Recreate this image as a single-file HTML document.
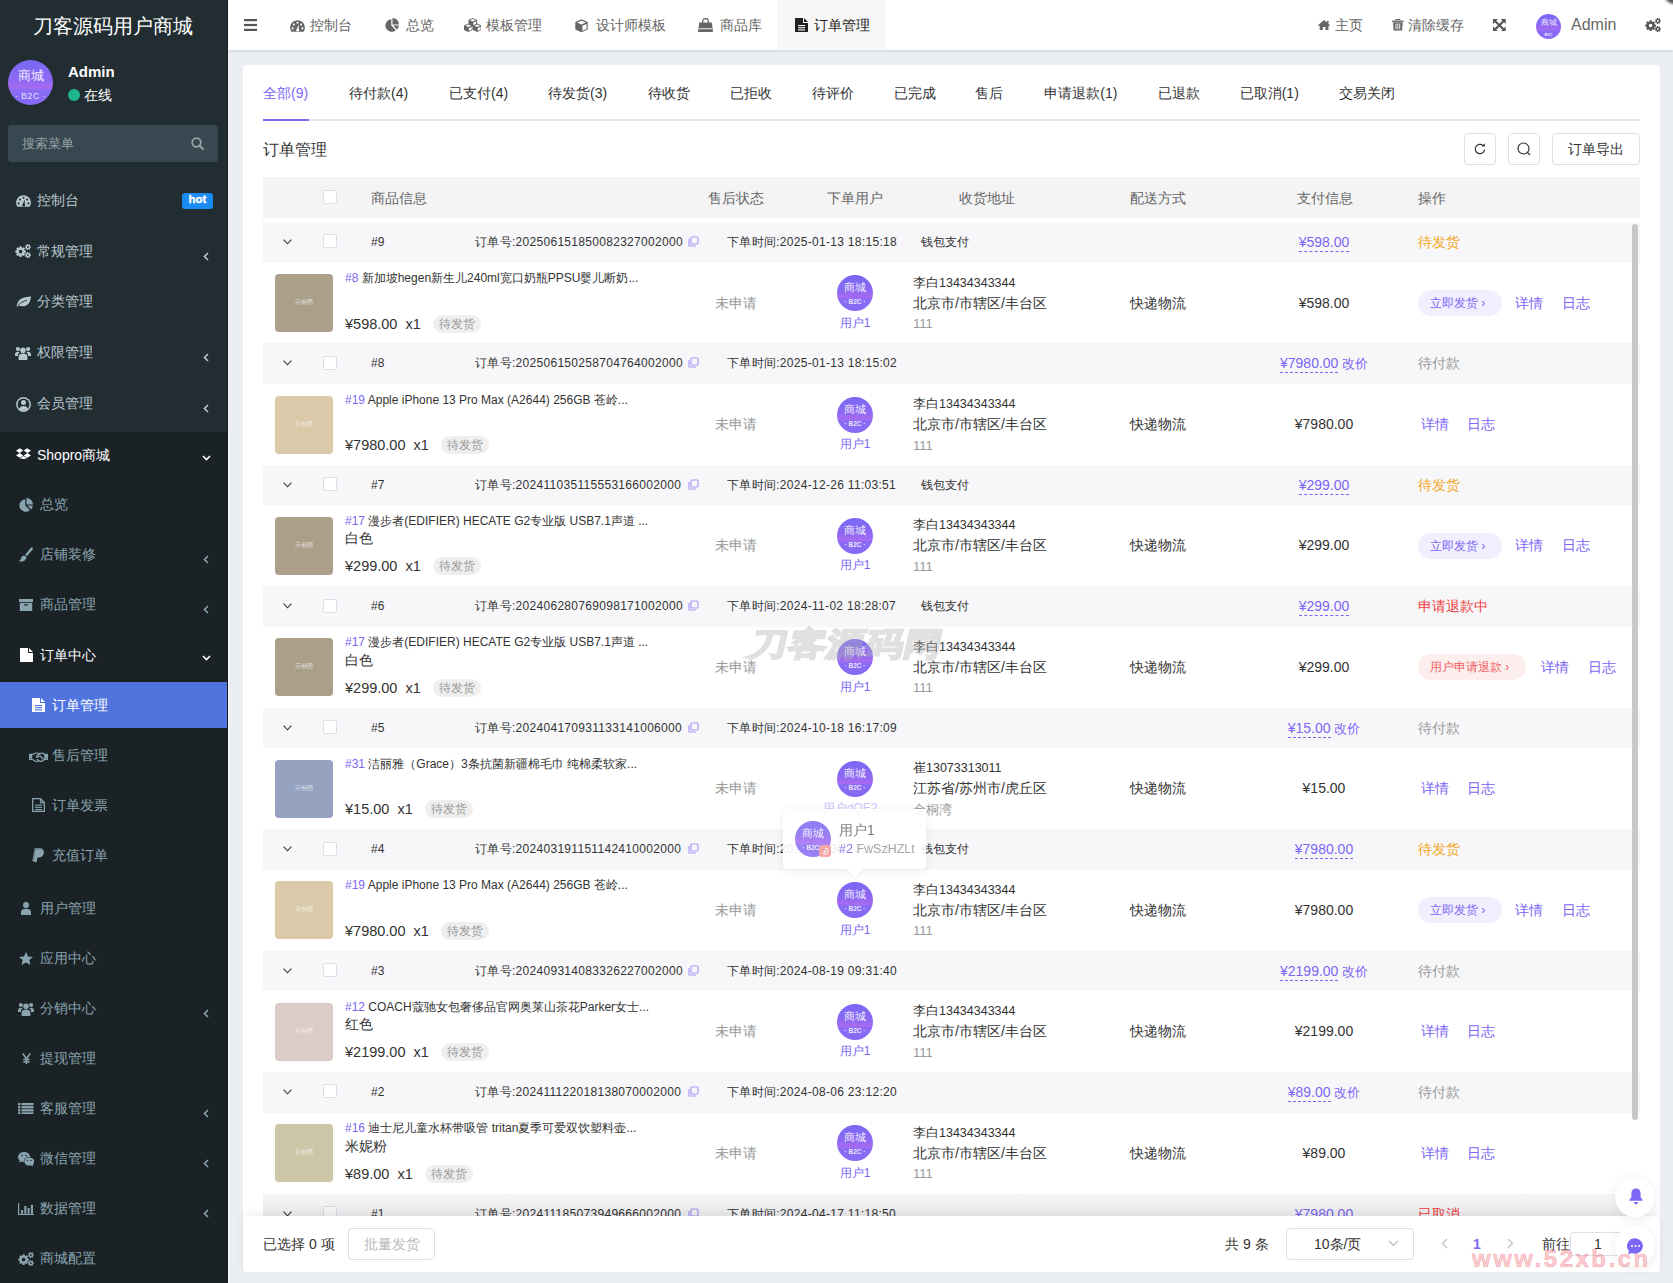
<!DOCTYPE html><html><head><meta charset="utf-8"><style>
*{margin:0;padding:0;box-sizing:border-box}
html,body{width:1673px;height:1283px;overflow:hidden}
body{font-family:"Liberation Sans",sans-serif;background:#ebeef3;position:relative;color:#333;font-size:14px}
.a{position:absolute;white-space:nowrap}
.sb{position:absolute;left:0;top:0;width:228px;height:1283px;background:#1a2226;overflow:hidden}
.sbtop{position:absolute;left:0;top:0;width:228px;height:432px;background:#222d32}
.sbedge{position:absolute;left:227px;top:0;width:1px;height:1283px;background:#141a1d}
.hd{position:absolute;left:228px;top:0;width:1445px;height:50px;background:#fff;box-shadow:0 1px 3px rgba(0,0,0,.12)}
.card{position:absolute;left:243px;top:65px;width:1417px;height:1207px;background:#fff;border-radius:4px}
.mi{color:#b8c7ce;font-size:14px}
.si{color:#8aa4af;font-size:14px}
.ic{position:absolute}
.grp{position:absolute;left:263px;width:1377px;height:40.6px;background:#f7f7f9}
.txt12{font-size:12px;color:#333}
.cb{position:absolute;width:14px;height:14px;border:1px solid #dcdfe6;border-radius:2px;background:#fff}
.img{position:absolute;left:275px;width:58px;height:58px;border-radius:4px}
.img span{position:absolute;left:0;right:0;top:24px;text-align:center;font-size:6px;color:rgba(255,255,255,.7)}
.tag{position:absolute;height:18px;line-height:18px;border-radius:9px;background:#efefef;color:#999;font-size:12px;padding:0 6px}
.av{position:absolute;width:36px;height:36px;border-radius:50%;background:linear-gradient(180deg,#7868f5 0%,#8f69f2 45%,#a86af0 62%,#8a6cf5 66%,#8669f4 100%);overflow:hidden}
.av b{position:absolute;left:0;right:0;top:6px;text-align:center;color:rgba(255,255,255,.9);font-weight:normal;font-size:11px;line-height:13px}
.av i{position:absolute;left:0;right:0;top:23px;text-align:center;color:rgba(255,255,255,.85);font-style:normal;font-weight:bold;font-size:6.5px;line-height:8px}
.pur{color:#7b66f5}
.btnp{position:absolute;height:26px;line-height:26px;border-radius:13px;font-size:12px;padding:0 12px}
</style></head><body>
<div class="sb"><div class="sbtop"></div>
<div class="a" style="left:0;top:1px;width:226px;height:50px;line-height:50px;text-align:center;color:#fff;font-size:20px">刀客源码用户商城</div>
<div class="av" style="left:8px;top:60px;width:45px;height:45px"><b style="top:8px;font-size:13px;line-height:15px">商城</b><i style="top:30.5px;font-size:8.5px;line-height:10px;font-weight:normal;letter-spacing:.6px">· B2C ·</i></div>
<div class="a" style="left:68px;top:62px;line-height:20px;color:#fff;font-weight:bold;font-size:15px">Admin</div>
<div class="a" style="left:68px;top:89px;width:12px;height:12px;border-radius:50%;background:#1fb58f"></div>
<div class="a" style="left:84px;top:85px;line-height:20px;color:#fff;font-size:14px">在线</div>
<div class="a" style="left:8px;top:125px;width:210px;height:37px;background:#374850;border-radius:3px"></div>
<div class="a" style="left:22px;top:134px;line-height:20px;color:#99a3a8;font-size:13px">搜索菜单</div>
<svg class="a" style="left:191px;top:137px" width="13" height="13" viewBox="0 0 13 13"><circle cx="5.5" cy="5.5" r="4.3" fill="none" stroke="#9aa2a6" stroke-width="1.8"/><path d="M8.6 8.6 L12 12" stroke="#9aa2a6" stroke-width="2" stroke-linecap="round"/></svg>
<div class="a" style="left:0;top:682px;width:228px;height:46px;background:#5073de"></div>
<div class="a" style="left:37px;top:190px;line-height:20px;color:#b8c7ce;font-size:14px">控制台</div>
<svg class="a" style="left:15.6px;top:194.5px" width="15" height="12" viewBox="0 0 15 12" preserveAspectRatio="none"><path d="M1.41 11.8 A7.4 7.4 0 1 1 13.59 11.8 Z" fill="#b8c7ce"/><circle cx="2.6" cy="8.4" r="1.05" fill="#222d32"/><circle cx="3.9" cy="4.6" r="1.05" fill="#222d32"/><circle cx="7.5" cy="2.7" r="1.05" fill="#222d32"/><circle cx="11.1" cy="4.6" r="1.05" fill="#222d32"/><circle cx="12.4" cy="8.4" r="1.05" fill="#222d32"/><path d="M6.5 10.2 L8.6 4.2 L8.9 10.4 Z" fill="#222d32"/><circle cx="7.7" cy="10.2" r="1.4" fill="#222d32"/></svg>
<div class="a" style="left:182px;top:193px;width:31px;height:16px;line-height:13px;border-radius:3px;background:#198bf2;color:#fff;font-weight:bold;font-size:11.5px;-webkit-text-stroke:.35px #fff;text-align:center">hot</div>
<div class="a" style="left:37px;top:241px;line-height:20px;color:#b8c7ce;font-size:14px">常规管理</div>
<svg class="a" style="left:15px;top:244px" width="16" height="14" viewBox="0 0 16 14" preserveAspectRatio="none"><path d="M9.48 6.27 L10.92 6.65 L10.92 8.55 L9.48 8.93 L9.28 9.40 L10.03 10.69 L8.69 12.03 L7.40 11.28 L6.93 11.48 L6.55 12.92 L4.65 12.92 L4.27 11.48 L3.80 11.28 L2.51 12.03 L1.17 10.69 L1.92 9.40 L1.72 8.93 L0.28 8.55 L0.28 6.65 L1.72 6.27 L1.92 5.80 L1.17 4.51 L2.51 3.17 L3.80 3.92 L4.27 3.72 L4.65 2.28 L6.55 2.28 L6.93 3.72 L7.40 3.92 L8.69 3.17 L10.03 4.51 L9.28 5.80 Z" fill="#b8c7ce"/><circle cx="5.6" cy="7.6" r="1.8" fill="#222d32"/><path d="M14.95 2.19 L15.84 2.40 L15.84 3.60 L14.95 3.81 L14.81 4.09 L15.20 4.92 L14.26 5.67 L13.54 5.10 L13.23 5.17 L12.83 6.00 L11.66 5.73 L11.66 4.81 L11.41 4.62 L10.51 4.82 L9.99 3.73 L10.71 3.16 L10.71 2.84 L9.99 2.27 L10.51 1.18 L11.41 1.38 L11.66 1.19 L11.66 0.27 L12.83 0.00 L13.23 0.83 L13.54 0.90 L14.26 0.33 L15.20 1.08 L14.81 1.91 Z" fill="#b8c7ce"/><circle cx="12.9" cy="3.0" r="0.9" fill="#222d32"/><path d="M14.95 10.29 L15.84 10.50 L15.84 11.70 L14.95 11.91 L14.81 12.19 L15.20 13.02 L14.26 13.77 L13.54 13.20 L13.23 13.27 L12.83 14.10 L11.66 13.83 L11.66 12.91 L11.41 12.72 L10.51 12.92 L9.99 11.83 L10.71 11.26 L10.71 10.94 L9.99 10.37 L10.51 9.28 L11.41 9.48 L11.66 9.29 L11.66 8.37 L12.83 8.10 L13.23 8.93 L13.54 9.00 L14.26 8.43 L15.20 9.18 L14.81 10.01 Z" fill="#b8c7ce"/><circle cx="12.9" cy="11.1" r="0.9" fill="#222d32"/></svg>
<svg class="a" style="left:203px;top:252px" width="6" height="9" viewBox="0 0 6 9"><path d="M5 1 L1.5 4.5 L5 8" fill="none" stroke="#b8c7ce" stroke-width="1.6"/></svg>
<div class="a" style="left:37px;top:291px;line-height:20px;color:#b8c7ce;font-size:14px">分类管理</div>
<svg class="a" style="left:15.6px;top:296px" width="15" height="11" viewBox="0 0 15 11" preserveAspectRatio="none"><path d="M0.4 10.8 C1.2 8 1.8 3.8 6.8 2 C10 0.9 12.8 1.4 14.7 0.1 C15 4.2 13.6 8.6 9.2 9.9 C6.2 10.7 3.6 9.6 2.1 10.3 Z" fill="#b8c7ce"/><path d="M1.4 10.3 C3.8 6.8 7.5 5.2 11 4.2" stroke="#222d32" stroke-width="0.9" fill="none"/></svg>
<div class="a" style="left:37px;top:342px;line-height:20px;color:#b8c7ce;font-size:14px">权限管理</div>
<svg class="a" style="left:15px;top:345.8px" width="16" height="14" viewBox="0 0 16 14" preserveAspectRatio="none"><circle cx="8" cy="4.2" r="2.8" fill="#b8c7ce"/><path d="M3.6 14 V10.6 C3.6 8.3 5.4 7.5 8 7.5 C10.6 7.5 12.4 8.3 12.4 10.6 V14 Z" fill="#b8c7ce"/><circle cx="2.9" cy="3" r="2.1" fill="#b8c7ce"/><circle cx="13.1" cy="3" r="2.1" fill="#b8c7ce"/><path d="M0 10 V8.3 C0 6.5 1.2 5.7 2.9 5.7 C3.8 5.7 4.4 5.9 4.8 6.3 C3.4 7.1 2.9 8.4 2.9 10 Z" fill="#b8c7ce"/><path d="M16 10 V8.3 C16 6.5 14.8 5.7 13.1 5.7 C12.2 5.7 11.6 5.9 11.2 6.3 C12.6 7.1 13.1 8.4 13.1 10 Z" fill="#b8c7ce"/></svg>
<svg class="a" style="left:203px;top:353px" width="6" height="9" viewBox="0 0 6 9"><path d="M5 1 L1.5 4.5 L5 8" fill="none" stroke="#b8c7ce" stroke-width="1.6"/></svg>
<div class="a" style="left:37px;top:393px;line-height:20px;color:#b8c7ce;font-size:14px">会员管理</div>
<svg class="a" style="left:15.6px;top:396.5px" width="15" height="15" viewBox="0 0 15 15" preserveAspectRatio="none"><circle cx="7.5" cy="7.5" r="7.4" fill="#b8c7ce"/><circle cx="7.5" cy="7.5" r="5.9" fill="#222d32"/><circle cx="7.5" cy="5.6" r="2.5" fill="#b8c7ce"/><path d="M3.2 12 C3.6 9.7 5.3 8.9 7.5 8.9 C9.7 8.9 11.4 9.7 11.8 12 C10.7 13.1 9.2 13.6 7.5 13.6 C5.8 13.6 4.3 13.1 3.2 12 Z" fill="#b8c7ce"/></svg>
<svg class="a" style="left:203px;top:404px" width="6" height="9" viewBox="0 0 6 9"><path d="M5 1 L1.5 4.5 L5 8" fill="none" stroke="#b8c7ce" stroke-width="1.6"/></svg>
<div class="a" style="left:37px;top:445px;line-height:20px;color:#fff;font-size:14px">Shopro商城</div>
<svg class="a" style="left:15.8px;top:448px" width="15" height="11" viewBox="0 0 15 11" preserveAspectRatio="none"><path d="M0 2.7 L3.8 0.2 L7.3 2.6 L3.6 5 Z M7.7 2.6 L11.2 0.2 L15 2.7 L11.4 5 Z M0 7.4 L3.6 5.1 L7.3 7.5 L3.8 9.8 Z M7.7 7.5 L11.4 5.1 L15 7.4 L11.2 9.8 Z M3.8 10.3 L7.5 8 L11.2 10.3 L7.5 11 Z" fill="#fff"/></svg>
<svg class="a" style="left:202px;top:455px" width="9" height="6" viewBox="0 0 9 6"><path d="M1 1 L4.5 4.6 L8 1" fill="none" stroke="#fff" stroke-width="1.6"/></svg>
<div class="a" style="left:40px;top:494px;line-height:20px;color:#8aa4af;font-size:14px">总览</div>
<svg class="a" style="left:18.9px;top:497.5px" width="14" height="14" viewBox="0 0 14 14" preserveAspectRatio="none"><path d="M6.3 1.2 V7.6 L10.9 12.2 A6.3 6.3 0 1 1 6.3 1.2 Z" fill="#8aa4af"/><path d="M7.5 0 A6.5 6.5 0 0 1 14 6.5 H7.5 Z" fill="#8aa4af"/><path d="M8.2 7.6 H13.8 A6.4 6.4 0 0 1 12 11.6 Z" fill="#8aa4af"/></svg>
<div class="a" style="left:40px;top:544px;line-height:20px;color:#8aa4af;font-size:14px">店铺装修</div>
<svg class="a" style="left:18.9px;top:547.3px" width="14" height="15" viewBox="0 0 14 15" preserveAspectRatio="none"><path d="M13.4 0.6 C14.1 1.2 13.9 2 13.2 2.9 L7.9 9.2 L6.1 7.7 L11.6 1 C12.3 0.3 12.9 0.2 13.4 0.6 Z" fill="#8aa4af"/><path d="M5.4 8.4 L7.4 10 C7.3 12.7 5.4 14.6 2.5 14.6 C1.4 14.6 0.5 14.3 0 13.9 C1.4 13.1 1.8 12.6 2 11.3 C2.3 9.6 3.7 8.4 5.4 8.4 Z" fill="#8aa4af"/></svg>
<svg class="a" style="left:203px;top:555px" width="6" height="9" viewBox="0 0 6 9"><path d="M5 1 L1.5 4.5 L5 8" fill="none" stroke="#8aa4af" stroke-width="1.6"/></svg>
<div class="a" style="left:40px;top:594px;line-height:20px;color:#8aa4af;font-size:14px">商品管理</div>
<svg class="a" style="left:19.3px;top:598.6px" width="14" height="12" viewBox="0 0 14 12" preserveAspectRatio="none"><rect x="0" y="0" width="14" height="3" fill="#8aa4af"/><rect x="0.8" y="3.8" width="12.4" height="8.2" fill="#8aa4af"/><rect x="5" y="5.2" width="4" height="1.4" rx=".5" fill="#1a2226"/></svg>
<svg class="a" style="left:203px;top:605px" width="6" height="9" viewBox="0 0 6 9"><path d="M5 1 L1.5 4.5 L5 8" fill="none" stroke="#8aa4af" stroke-width="1.6"/></svg>
<div class="a" style="left:40px;top:645px;line-height:20px;color:#fff;font-size:14px">订单中心</div>
<svg class="a" style="left:19.6px;top:647.6px" width="13" height="14" viewBox="0 0 13 14" preserveAspectRatio="none"><path d="M0 0 H8 V5 H13 V14 H0 Z" fill="#fff"/><path d="M9 0 L13 4 H9 Z" fill="#fff"/></svg>
<svg class="a" style="left:202px;top:655px" width="9" height="6" viewBox="0 0 9 6"><path d="M1 1 L4.5 4.6 L8 1" fill="none" stroke="#fff" stroke-width="1.6"/></svg>
<div class="a" style="left:52px;top:695px;line-height:20px;color:#fff;font-size:14px">订单管理</div>
<svg class="a" style="left:31.7px;top:697.8px" width="13" height="14" viewBox="0 0 13 14" preserveAspectRatio="none"><path d="M0 0 H8 V5 H13 V14 H0 Z" fill="#fff"/><path d="M9 0 L13 4 H9 Z" fill="#fff"/><rect x="3" y="7" width="7" height="1.1" fill="#5073de"/><rect x="3" y="9.2" width="7" height="1.1" fill="#5073de"/><rect x="3" y="11.4" width="7" height="1.1" fill="#5073de"/></svg>
<div class="a" style="left:52px;top:745px;line-height:20px;color:#8aa4af;font-size:14px">售后管理</div>
<svg class="a" style="left:28.9px;top:751.6px" width="19" height="10" viewBox="0 0 19 10" preserveAspectRatio="none"><rect x="0" y="1.8" width="3.2" height="6.2" fill="#8aa4af"/><rect x="15.8" y="1.8" width="3.2" height="6.2" fill="#8aa4af"/><circle cx="1.6" cy="6.6" r=".5" fill="#1a2226"/><circle cx="17.4" cy="6.6" r=".5" fill="#1a2226"/><path d="M3.2 2.6 C5 1.8 6.6 1 8.6 1 C9.8 1 10.6 1.4 11.2 1.6 C12.6 0.9 14 1 15.8 2.4 V7.4 C14.6 8 13.4 9.4 11.8 9.4 C11 9.4 10 8.7 9.1 8.1 L7.8 7.2 M3.2 7.2 L7 9.4 C7.8 9.8 8.8 9.6 9.3 9 M11.2 1.6 C10 2.2 8.3 3.3 7.5 4.2 C7.2 4.7 7.6 5.4 8.3 5.3 C9.3 5.1 10.1 4.3 11 4 L14.4 7.3" fill="none" stroke="#8aa4af" stroke-width="1.2"/></svg>
<div class="a" style="left:52px;top:795px;line-height:20px;color:#8aa4af;font-size:14px">订单发票</div>
<svg class="a" style="left:31.7px;top:797.8px" width="13" height="14" viewBox="0 0 13 14" preserveAspectRatio="none"><path d="M0.7 0.7 H8.4 L12.3 4.6 V13.3 H0.7 Z" fill="none" stroke="#8aa4af" stroke-width="1.3"/><path d="M8.4 0.7 V4.6 H12.3" fill="none" stroke="#8aa4af" stroke-width="1.1"/><rect x="3" y="6.6" width="7" height="1.1" fill="#8aa4af"/><rect x="3" y="8.8" width="7" height="1.1" fill="#8aa4af"/><rect x="3" y="11" width="7" height="1.1" fill="#8aa4af"/></svg>
<div class="a" style="left:52px;top:845px;line-height:20px;color:#8aa4af;font-size:14px">充值订单</div>
<svg class="a" style="left:32.1px;top:847.6px" width="12" height="14.5" viewBox="0 0 12 14.5" preserveAspectRatio="none"><path d="M2.6 0 H7.6 C10.8 0 12 1.7 11.5 4.4 C10.9 7.3 8.8 8.6 5.9 8.6 H4.5 L3.6 13.2 H0.2 Z" fill="#8aa4af" opacity=".75"/><path d="M3.8 1.6 H8.4 C11 1.6 12.2 3 11.8 5.3 C11.3 8 9.4 9.6 6.6 9.6 H5.4 L4.6 14.4 H1.6 Z" fill="#8aa4af"/></svg>
<div class="a" style="left:40px;top:898px;line-height:20px;color:#8aa4af;font-size:14px">用户管理</div>
<svg class="a" style="left:20.9px;top:902.4px" width="10" height="13" viewBox="0 0 10 13" preserveAspectRatio="none"><circle cx="5" cy="3" r="3" fill="#8aa4af"/><path d="M0 13 V10.2 C0 7.7 2 6.8 5 6.8 C8 6.8 10 7.7 10 10.2 V13 Z" fill="#8aa4af"/></svg>
<div class="a" style="left:40px;top:948px;line-height:20px;color:#8aa4af;font-size:14px">应用中心</div>
<svg class="a" style="left:19.1px;top:952.4px" width="14" height="13" viewBox="0 0 14 13" preserveAspectRatio="none"><polygon points="7,0 9.1,4.4 14,4.9 10.4,8.1 11.4,13 7,10.5 2.6,13 3.6,8.1 0,4.9 4.9,4.4" fill="#8aa4af"/></svg>
<div class="a" style="left:40px;top:998px;line-height:20px;color:#8aa4af;font-size:14px">分销中心</div>
<svg class="a" style="left:18.1px;top:1002px" width="16" height="14" viewBox="0 0 16 14" preserveAspectRatio="none"><circle cx="8" cy="4.2" r="2.8" fill="#8aa4af"/><path d="M3.6 14 V10.6 C3.6 8.3 5.4 7.5 8 7.5 C10.6 7.5 12.4 8.3 12.4 10.6 V14 Z" fill="#8aa4af"/><circle cx="2.9" cy="3" r="2.1" fill="#8aa4af"/><circle cx="13.1" cy="3" r="2.1" fill="#8aa4af"/><path d="M0 10 V8.3 C0 6.5 1.2 5.7 2.9 5.7 C3.8 5.7 4.4 5.9 4.8 6.3 C3.4 7.1 2.9 8.4 2.9 10 Z" fill="#8aa4af"/><path d="M16 10 V8.3 C16 6.5 14.8 5.7 13.1 5.7 C12.2 5.7 11.6 5.9 11.2 6.3 C12.6 7.1 13.1 8.4 13.1 10 Z" fill="#8aa4af"/></svg>
<svg class="a" style="left:203px;top:1009px" width="6" height="9" viewBox="0 0 6 9"><path d="M5 1 L1.5 4.5 L5 8" fill="none" stroke="#8aa4af" stroke-width="1.6"/></svg>
<div class="a" style="left:40px;top:1048px;line-height:20px;color:#8aa4af;font-size:14px">提现管理</div>
<svg class="a" style="left:21.6px;top:1052.8px" width="9" height="11.6" viewBox="0 0 9 11.6" preserveAspectRatio="none"><path d="M0.8 0.5 L4.5 5.8 L8.2 0.5 M4.5 5.8 V11.6 M1.3 6.4 H7.7 M1.3 8.8 H7.7" fill="none" stroke="#8aa4af" stroke-width="1.5"/></svg>
<div class="a" style="left:40px;top:1098px;line-height:20px;color:#8aa4af;font-size:14px">客服管理</div>
<svg class="a" style="left:18.1px;top:1102.5px" width="15.5" height="11.6" viewBox="0 0 15.5 11.6" preserveAspectRatio="none"><rect x="0" y="0" width="2.4" height="2.3" fill="#8aa4af"/><rect x="3.5" y="0" width="12" height="2.3" fill="#8aa4af"/><rect x="0" y="3.1" width="2.4" height="2.3" fill="#8aa4af"/><rect x="3.5" y="3.1" width="12" height="2.3" fill="#8aa4af"/><rect x="0" y="6.2" width="2.4" height="2.3" fill="#8aa4af"/><rect x="3.5" y="6.2" width="12" height="2.3" fill="#8aa4af"/><rect x="0" y="9.3" width="2.4" height="2.3" fill="#8aa4af"/><rect x="3.5" y="9.3" width="12" height="2.3" fill="#8aa4af"/></svg>
<svg class="a" style="left:203px;top:1109px" width="6" height="9" viewBox="0 0 6 9"><path d="M5 1 L1.5 4.5 L5 8" fill="none" stroke="#8aa4af" stroke-width="1.6"/></svg>
<div class="a" style="left:40px;top:1148px;line-height:20px;color:#8aa4af;font-size:14px">微信管理</div>
<svg class="a" style="left:17.7px;top:1151.7px" width="16.4" height="14.3" viewBox="0 0 16.4 14.3" preserveAspectRatio="none"><ellipse cx="6.1" cy="5.1" rx="6.1" ry="5.1" fill="#8aa4af"/><path d="M1.8 8.2 L1.2 10.6 L4 9.3 Z" fill="#8aa4af"/><ellipse cx="11.3" cy="9.5" rx="5.6" ry="4.6" fill="#1a2226"/><ellipse cx="11.3" cy="9.5" rx="5.0" ry="4.1" fill="#8aa4af"/><path d="M14.8 12 L15.4 14.3 L12.8 13.2 Z" fill="#8aa4af"/><circle cx="4" cy="3.6" r=".8" fill="#1a2226"/><circle cx="8" cy="3.6" r=".8" fill="#1a2226"/><circle cx="9.5" cy="8.4" r=".7" fill="#1a2226"/><circle cx="13" cy="8.4" r=".7" fill="#1a2226"/></svg>
<svg class="a" style="left:203px;top:1159px" width="6" height="9" viewBox="0 0 6 9"><path d="M5 1 L1.5 4.5 L5 8" fill="none" stroke="#8aa4af" stroke-width="1.6"/></svg>
<div class="a" style="left:40px;top:1198px;line-height:20px;color:#8aa4af;font-size:14px">数据管理</div>
<svg class="a" style="left:17.5px;top:1203px" width="16.6" height="12.2" viewBox="0 0 16.6 12.2" preserveAspectRatio="none"><path d="M0.6 0 V11.6 H16.6" fill="none" stroke="#8aa4af" stroke-width="1.2"/><rect x="3" y="7.2" width="2.1" height="3.6" fill="#8aa4af"/><rect x="6.3" y="3" width="2.1" height="7.8" fill="#8aa4af"/><rect x="9.6" y="5" width="2.1" height="5.8" fill="#8aa4af"/><rect x="12.9" y="1.8" width="2.1" height="9" fill="#8aa4af"/></svg>
<svg class="a" style="left:203px;top:1209px" width="6" height="9" viewBox="0 0 6 9"><path d="M5 1 L1.5 4.5 L5 8" fill="none" stroke="#8aa4af" stroke-width="1.6"/></svg>
<div class="a" style="left:40px;top:1248px;line-height:20px;color:#8aa4af;font-size:14px">商城配置</div>
<svg class="a" style="left:18.1px;top:1252.2px" width="16" height="14" viewBox="0 0 16 14" preserveAspectRatio="none"><path d="M9.48 6.27 L10.92 6.65 L10.92 8.55 L9.48 8.93 L9.28 9.40 L10.03 10.69 L8.69 12.03 L7.40 11.28 L6.93 11.48 L6.55 12.92 L4.65 12.92 L4.27 11.48 L3.80 11.28 L2.51 12.03 L1.17 10.69 L1.92 9.40 L1.72 8.93 L0.28 8.55 L0.28 6.65 L1.72 6.27 L1.92 5.80 L1.17 4.51 L2.51 3.17 L3.80 3.92 L4.27 3.72 L4.65 2.28 L6.55 2.28 L6.93 3.72 L7.40 3.92 L8.69 3.17 L10.03 4.51 L9.28 5.80 Z" fill="#8aa4af"/><circle cx="5.6" cy="7.6" r="1.8" fill="#1a2226"/><path d="M14.95 2.19 L15.84 2.40 L15.84 3.60 L14.95 3.81 L14.81 4.09 L15.20 4.92 L14.26 5.67 L13.54 5.10 L13.23 5.17 L12.83 6.00 L11.66 5.73 L11.66 4.81 L11.41 4.62 L10.51 4.82 L9.99 3.73 L10.71 3.16 L10.71 2.84 L9.99 2.27 L10.51 1.18 L11.41 1.38 L11.66 1.19 L11.66 0.27 L12.83 0.00 L13.23 0.83 L13.54 0.90 L14.26 0.33 L15.20 1.08 L14.81 1.91 Z" fill="#8aa4af"/><circle cx="12.9" cy="3.0" r="0.9" fill="#1a2226"/><path d="M14.95 10.29 L15.84 10.50 L15.84 11.70 L14.95 11.91 L14.81 12.19 L15.20 13.02 L14.26 13.77 L13.54 13.20 L13.23 13.27 L12.83 14.10 L11.66 13.83 L11.66 12.91 L11.41 12.72 L10.51 12.92 L9.99 11.83 L10.71 11.26 L10.71 10.94 L9.99 10.37 L10.51 9.28 L11.41 9.48 L11.66 9.29 L11.66 8.37 L12.83 8.10 L13.23 8.93 L13.54 9.00 L14.26 8.43 L15.20 9.18 L14.81 10.01 Z" fill="#8aa4af"/><circle cx="12.9" cy="11.1" r="0.9" fill="#1a2226"/></svg>
<div class="sbedge"></div></div>
<div class="a" style="left:228px;top:50px;width:1px;height:1233px;background:#f7faff"></div>
<div class="hd"></div>
<svg class="a" style="left:244px;top:19px" width="13" height="12" viewBox="0 0 13 12"><rect y="0" width="13" height="2.2" fill="#555"/><rect y="4.9" width="13" height="2.2" fill="#555"/><rect y="9.8" width="13" height="2.2" fill="#555"/></svg>
<div class="a" style="left:777px;top:0;width:109px;height:50px;background:#f7f7f7"></div>
<div class="a" style="left:310.3px;top:15px;line-height:20px;color:#666;font-size:14px">控制台</div>
<svg class="a" style="left:290.1px;top:19.9px" width="15" height="12" viewBox="0 0 15 12" preserveAspectRatio="none"><path d="M1.41 11.8 A7.4 7.4 0 1 1 13.59 11.8 Z" fill="#666"/><circle cx="2.6" cy="8.4" r="1.05" fill="#fff"/><circle cx="3.9" cy="4.6" r="1.05" fill="#fff"/><circle cx="7.5" cy="2.7" r="1.05" fill="#fff"/><circle cx="11.1" cy="4.6" r="1.05" fill="#fff"/><circle cx="12.4" cy="8.4" r="1.05" fill="#fff"/><path d="M6.5 10.2 L8.6 4.2 L8.9 10.4 Z" fill="#fff"/><circle cx="7.7" cy="10.2" r="1.4" fill="#fff"/></svg>
<div class="a" style="left:405.6px;top:15px;line-height:20px;color:#666;font-size:14px">总览</div>
<svg class="a" style="left:385.1px;top:18px" width="14" height="14" viewBox="0 0 14 14" preserveAspectRatio="none"><path d="M6.3 1.2 V7.6 L10.9 12.2 A6.3 6.3 0 1 1 6.3 1.2 Z" fill="#666"/><path d="M7.5 0 A6.5 6.5 0 0 1 14 6.5 H7.5 Z" fill="#666"/><path d="M8.2 7.6 H13.8 A6.4 6.4 0 0 1 12 11.6 Z" fill="#666"/></svg>
<div class="a" style="left:486.3px;top:15px;line-height:20px;color:#666;font-size:14px">模板管理</div>
<svg class="a" style="left:463.9px;top:18px" width="17.5" height="14" viewBox="0 0 17.5 14" preserveAspectRatio="none"><g transform="translate(4.45,0)"><path d="M4.3 0 L8.6 1.9 V6.6 L4.3 8.5 L0 6.6 V1.9 Z" fill="#666"/><path d="M4.3 1.1 L7.2 2.3 L4.3 3.5 L1.4 2.3 Z" fill="#fff"/><path d="M4.9 4.4 L7.7 3.2 V6.2 L4.9 7.3 Z" fill="#fff"/></g><g transform="translate(0,5.5)"><path d="M4.3 0 L8.6 1.9 V6.6 L4.3 8.5 L0 6.6 V1.9 Z" fill="#666"/><path d="M4.3 1.1 L7.2 2.3 L4.3 3.5 L1.4 2.3 Z" fill="#fff"/><path d="M4.9 4.4 L7.7 3.2 V6.2 L4.9 7.3 Z" fill="#fff"/></g><g transform="translate(8.9,5.5)"><path d="M4.3 0 L8.6 1.9 V6.6 L4.3 8.5 L0 6.6 V1.9 Z" fill="#666"/><path d="M4.3 1.1 L7.2 2.3 L4.3 3.5 L1.4 2.3 Z" fill="#fff"/><path d="M4.9 4.4 L7.7 3.2 V6.2 L4.9 7.3 Z" fill="#fff"/></g></svg>
<div class="a" style="left:596.2px;top:15px;line-height:20px;color:#666;font-size:14px">设计师模板</div>
<svg class="a" style="left:575.2px;top:18.6px" width="13" height="13.5" viewBox="0 0 13 13.5" preserveAspectRatio="none"><path d="M6.5 0.3 L12.7 3 V10.6 L6.5 13.3 L0.3 10.6 V3 Z" fill="#666"/><path d="M6.5 1.8 L10.9 3.6 L6.5 5.5 L2.1 3.6 Z" fill="#fff"/><path d="M7.4 6.8 L11.5 5 V10 L7.4 11.8 Z" fill="#fff"/></svg>
<div class="a" style="left:719.6px;top:15px;line-height:20px;color:#666;font-size:14px">商品库</div>
<svg class="a" style="left:698.2px;top:17.8px" width="15" height="14.2" viewBox="0 0 15 14.2" preserveAspectRatio="none"><path d="M4.6 5.5 V3.6 C4.6 1.6 5.8 0.6 7.5 0.6 C9.2 0.6 10.4 1.6 10.4 3.6 V5.5" fill="none" stroke="#666" stroke-width="1.3"/><path d="M1.2 4.6 H13.8 L15 14.2 H0 Z" fill="#666"/><rect x="0.6" y="10.3" width="13.8" height="0.9" fill="#fff"/></svg>
<div class="a" style="left:814px;top:15px;line-height:20px;color:#222;font-size:14px">订单管理</div>
<svg class="a" style="left:794.9px;top:17.8px" width="13" height="14" viewBox="0 0 13 14" preserveAspectRatio="none"><path d="M0 0 H8 V5 H13 V14 H0 Z" fill="#222"/><path d="M9 0 L13 4 H9 Z" fill="#222"/><rect x="3" y="7" width="7" height="1.1" fill="#f7f7f7"/><rect x="3" y="9.2" width="7" height="1.1" fill="#f7f7f7"/><rect x="3" y="11.4" width="7" height="1.1" fill="#f7f7f7"/></svg>
<div class="a" style="left:1334.6px;top:15px;line-height:20px;color:#666;font-size:14px">主页</div>
<svg class="a" style="left:1317.7px;top:19.8px" width="12.2" height="10.2" viewBox="0 0 12.2 10.2" preserveAspectRatio="none"><path d="M6.1 0 L12.2 5.3 L11.4 6.2 L10.5 5.4 V10.2 H7.4 V7.1 H4.8 V10.2 H1.7 V5.4 L0.8 6.2 L0 5.3 Z" fill="#666"/><rect x="8.9" y="0.8" width="1.7" height="2.8" fill="#666"/></svg>
<div class="a" style="left:1408px;top:15px;line-height:20px;color:#666;font-size:14px">清除缓存</div>
<svg class="a" style="left:1392.1px;top:19.2px" width="11.7" height="11.6" viewBox="0 0 11.7 11.6" preserveAspectRatio="none"><rect x="0" y="1.6" width="11.7" height="1.3" fill="#666"/><path d="M3.7 1.7 V0.5 H8 V1.7" fill="none" stroke="#666" stroke-width="1"/><path d="M1.1 3.3 H10.6 L10.1 11.6 H1.6 Z" fill="#666"/><rect x="3.5" y="4.6" width=".9" height="5.6" fill="#fff"/><rect x="5.4" y="4.6" width=".9" height="5.6" fill="#fff"/><rect x="7.3" y="4.6" width=".9" height="5.6" fill="#fff"/></svg>
<svg class="a" style="left:1493.4px;top:18.5px" width="12.7" height="12.4" viewBox="0 0 12.7 12.4" preserveAspectRatio="none"><path d="M2.2 2.2 L10.5 10.2 M10.5 2.2 L2.2 10.2" stroke="#555" stroke-width="2.2"/><path d="M0 0 H5 L0 5 Z M12.7 0 H7.7 L12.7 5 Z M0 12.4 H5 L0 7.4 Z M12.7 12.4 H7.7 L12.7 7.4 Z" fill="#555"/></svg>
<svg class="a" style="left:1645px;top:18px" width="16" height="14" viewBox="0 0 16 14" preserveAspectRatio="none"><path d="M9.48 6.27 L10.92 6.65 L10.92 8.55 L9.48 8.93 L9.28 9.40 L10.03 10.69 L8.69 12.03 L7.40 11.28 L6.93 11.48 L6.55 12.92 L4.65 12.92 L4.27 11.48 L3.80 11.28 L2.51 12.03 L1.17 10.69 L1.92 9.40 L1.72 8.93 L0.28 8.55 L0.28 6.65 L1.72 6.27 L1.92 5.80 L1.17 4.51 L2.51 3.17 L3.80 3.92 L4.27 3.72 L4.65 2.28 L6.55 2.28 L6.93 3.72 L7.40 3.92 L8.69 3.17 L10.03 4.51 L9.28 5.80 Z" fill="#555"/><circle cx="5.6" cy="7.6" r="1.8" fill="#fff"/><path d="M14.95 2.19 L15.84 2.40 L15.84 3.60 L14.95 3.81 L14.81 4.09 L15.20 4.92 L14.26 5.67 L13.54 5.10 L13.23 5.17 L12.83 6.00 L11.66 5.73 L11.66 4.81 L11.41 4.62 L10.51 4.82 L9.99 3.73 L10.71 3.16 L10.71 2.84 L9.99 2.27 L10.51 1.18 L11.41 1.38 L11.66 1.19 L11.66 0.27 L12.83 0.00 L13.23 0.83 L13.54 0.90 L14.26 0.33 L15.20 1.08 L14.81 1.91 Z" fill="#555"/><circle cx="12.9" cy="3.0" r="0.9" fill="#fff"/><path d="M14.95 10.29 L15.84 10.50 L15.84 11.70 L14.95 11.91 L14.81 12.19 L15.20 13.02 L14.26 13.77 L13.54 13.20 L13.23 13.27 L12.83 14.10 L11.66 13.83 L11.66 12.91 L11.41 12.72 L10.51 12.92 L9.99 11.83 L10.71 11.26 L10.71 10.94 L9.99 10.37 L10.51 9.28 L11.41 9.48 L11.66 9.29 L11.66 8.37 L12.83 8.10 L13.23 8.93 L13.54 9.00 L14.26 8.43 L15.20 9.18 L14.81 10.01 Z" fill="#555"/><circle cx="12.9" cy="11.1" r="0.9" fill="#fff"/></svg>
<div class="av" style="left:1536px;top:14px;width:25px;height:25px"><b style="top:4px;font-size:8px;line-height:9px">商城</b><i style="top:17px;font-size:4px">B2C</i></div>
<div class="a" style="left:1571px;top:14px;line-height:22px;color:#666;font-size:16px">Admin</div>
<div class="card"></div>
<div class="a" style="left:263px;top:83px;line-height:20px;color:#7b66f5;font-size:14px">全部(9)</div>
<div class="a" style="left:349px;top:83px;line-height:20px;color:#333;font-size:14px">待付款(4)</div>
<div class="a" style="left:449px;top:83px;line-height:20px;color:#333;font-size:14px">已支付(4)</div>
<div class="a" style="left:548px;top:83px;line-height:20px;color:#333;font-size:14px">待发货(3)</div>
<div class="a" style="left:647.5px;top:83px;line-height:20px;color:#333;font-size:14px">待收货</div>
<div class="a" style="left:729.6px;top:83px;line-height:20px;color:#333;font-size:14px">已拒收</div>
<div class="a" style="left:811.6px;top:83px;line-height:20px;color:#333;font-size:14px">待评价</div>
<div class="a" style="left:894.2px;top:83px;line-height:20px;color:#333;font-size:14px">已完成</div>
<div class="a" style="left:974.9px;top:83px;line-height:20px;color:#333;font-size:14px">售后</div>
<div class="a" style="left:1044.3px;top:83px;line-height:20px;color:#333;font-size:14px">申请退款(1)</div>
<div class="a" style="left:1157.5px;top:83px;line-height:20px;color:#333;font-size:14px">已退款</div>
<div class="a" style="left:1239.7px;top:83px;line-height:20px;color:#333;font-size:14px">已取消(1)</div>
<div class="a" style="left:1338.5px;top:83px;line-height:20px;color:#333;font-size:14px">交易关闭</div>
<div class="a" style="left:263px;top:119px;width:1377px;height:2px;background:#e4e7ed"></div>
<div class="a" style="left:263px;top:119px;width:46px;height:2px;background:#7b66f5"></div>
<div class="a" style="left:263px;top:139px;line-height:22px;color:#333;font-size:16px">订单管理</div>
<div class="a" style="left:1464px;top:133px;width:32px;height:32px;border:1px solid #dcdfe6;border-radius:4px"></div>
<div class="a" style="left:1508px;top:133px;width:32px;height:32px;border:1px solid #dcdfe6;border-radius:4px"></div>
<div class="a" style="left:1552px;top:133px;width:88px;height:32px;border:1px solid #dcdfe6;border-radius:4px"></div>
<div class="a" style="left:1568px;top:139px;line-height:20px;color:#333;font-size:14px">订单导出</div>
<div class="a" style="left:263px;top:177px;width:1377px;height:41px;background:#f4f4f5"></div>
<div class="cb" style="left:323px;top:190px"></div>
<div class="a" style="left:371px;top:188px;line-height:20px;color:#666;font-size:14px">商品信息</div>
<div class="a" style="left:707.7px;top:188px;line-height:20px;color:#666;font-size:14px">售后状态</div>
<div class="a" style="left:826.5px;top:188px;line-height:20px;color:#666;font-size:14px">下单用户</div>
<div class="a" style="left:958.9px;top:188px;line-height:20px;color:#666;font-size:14px">收货地址</div>
<div class="a" style="left:1129.5px;top:188px;line-height:20px;color:#666;font-size:14px">配送方式</div>
<div class="a" style="left:1296.5px;top:188px;line-height:20px;color:#666;font-size:14px">支付信息</div>
<div class="a" style="left:1418px;top:188px;line-height:20px;color:#666;font-size:14px">操作</div>
<div class="a" style="left:263px;top:222px;width:1377px;height:994px;overflow:hidden" id="tb">
<div class="a" style="left:0;top:0.00px;width:1377px;height:40.6px;background:#f7f7f9"></div>
<svg class="a" style="left:20px;top:17.00px" width="9" height="6" viewBox="0 0 9 6"><path d="M0.6 0.6 L4.5 4.8 L8.4 0.6" fill="none" stroke="#333" stroke-width="1.1"/></svg>
<div class="cb" style="left:60px;top:12.40px"></div>
<div class="a" style="left:108px;top:11.00px;line-height:18px;font-size:12px;color:#333">#9</div>
<div class="a" style="left:212px;top:11.00px;line-height:18px;font-size:12px;color:#333;letter-spacing:.3px">订单号:202506151850082327002000</div>
<svg class="a" style="left:425px;top:14.00px" width="11" height="11" viewBox="0 0 11 11"><rect x="3" y="1" width="7" height="7" rx="1" fill="none" stroke="#a99cf7" stroke-width="1.2"/><path d="M1 3 V9.5 a0.5 .5 0 0 0 .5 .5 H8" fill="none" stroke="#a99cf7" stroke-width="1.2"/></svg>
<div class="a" style="left:464px;top:11.00px;line-height:18px;font-size:12px;color:#333;letter-spacing:.3px">下单时间:2025-01-13 18:15:18</div>
<div class="a" style="left:657.5px;top:11.00px;line-height:18px;font-size:12px;color:#333">钱包支付</div>
<div class="a" style="left:961px;width:200px;text-align:center;top:10.00px;line-height:20px;font-size:14px;color:#7b66f5"><span style="border-bottom:1px dashed #7b66f5;padding-bottom:1px">¥598.00</span></div>
<div class="a" style="left:1155px;top:10.00px;line-height:20px;font-size:14px;color:#f5a623">待发货</div>
<div class="img" style="left:12px;top:52.10px;background:#ab9f8a"><span>示例图</span></div>
<div class="a" style="left:82px;top:47.10px;line-height:18px;font-size:12px;color:#333"><span class="pur">#8</span> 新加坡hegen新生儿240ml宽口奶瓶PPSU婴儿断奶...</div>
<div class="a" style="left:82px;top:91.60px;line-height:20px;font-size:14.5px;color:#333">¥598.00&nbsp; x1</div>
<div class="tag" style="left:170.0px;top:92.60px">待发货</div>
<div class="a" style="left:451.5px;top:70.60px;line-height:20px;font-size:14px;color:#999">未申请</div>
<div class="av" style="left:574px;top:53.10px"><b>商城</b><i>· B2C ·</i></div>
<div class="a" style="left:492px;width:200px;text-align:center;top:91.60px;line-height:18px;font-size:12px;color:#7b66f5">用户1</div>
<div class="a" style="left:650px;top:51.60px;line-height:18px;font-size:12.5px;color:#333">李白13434343344</div>
<div class="a" style="left:650px;top:70.60px;line-height:20px;font-size:14px;color:#333">北京市/市辖区/丰台区</div>
<div class="a" style="left:650px;top:93.10px;line-height:18px;font-size:13px;color:#999">111</div>
<div class="a" style="left:867px;top:70.60px;line-height:20px;font-size:14px;color:#333">快递物流</div>
<div class="a" style="left:961px;width:200px;text-align:center;top:70.60px;line-height:20px;font-size:14px;color:#333">¥598.00</div>
<div class="btnp" style="left:1155px;top:68.10px;width:84px;background:#f1eefe;color:#7b66f5">立即发货 ›</div>
<div class="a" style="left:1252px;top:70.60px;line-height:20px;font-size:14px;color:#7b66f5">详情</div>
<div class="a" style="left:1299px;top:70.60px;line-height:20px;font-size:14px;color:#7b66f5">日志</div>
<div class="a" style="left:0;top:121.44px;width:1377px;height:40.6px;background:#f7f7f9"></div>
<svg class="a" style="left:20px;top:138.44px" width="9" height="6" viewBox="0 0 9 6"><path d="M0.6 0.6 L4.5 4.8 L8.4 0.6" fill="none" stroke="#333" stroke-width="1.1"/></svg>
<div class="cb" style="left:60px;top:133.84px"></div>
<div class="a" style="left:108px;top:132.44px;line-height:18px;font-size:12px;color:#333">#8</div>
<div class="a" style="left:212px;top:132.44px;line-height:18px;font-size:12px;color:#333;letter-spacing:.3px">订单号:202506150258704764002000</div>
<svg class="a" style="left:425px;top:135.44px" width="11" height="11" viewBox="0 0 11 11"><rect x="3" y="1" width="7" height="7" rx="1" fill="none" stroke="#a99cf7" stroke-width="1.2"/><path d="M1 3 V9.5 a0.5 .5 0 0 0 .5 .5 H8" fill="none" stroke="#a99cf7" stroke-width="1.2"/></svg>
<div class="a" style="left:464px;top:132.44px;line-height:18px;font-size:12px;color:#333;letter-spacing:.3px">下单时间:2025-01-13 18:15:02</div>
<div class="a" style="left:961px;width:200px;text-align:center;top:131.44px;line-height:20px;font-size:14px;color:#7b66f5"><span style="border-bottom:1px dashed #7b66f5;padding-bottom:1px">¥7980.00</span><span style="font-size:13px"> 改价</span></div>
<div class="a" style="left:1155px;top:131.44px;line-height:20px;font-size:14px;color:#999">待付款</div>
<div class="img" style="left:12px;top:173.54px;background:#dacaaa"><span>示例图</span></div>
<div class="a" style="left:82px;top:168.54px;line-height:18px;font-size:12px;color:#333"><span class="pur">#19</span> Apple iPhone 13 Pro Max (A2644) 256GB 苍岭...</div>
<div class="a" style="left:82px;top:213.04px;line-height:20px;font-size:14.5px;color:#333">¥7980.00&nbsp; x1</div>
<div class="tag" style="left:178.1px;top:214.04px">待发货</div>
<div class="a" style="left:451.5px;top:192.04px;line-height:20px;font-size:14px;color:#999">未申请</div>
<div class="av" style="left:574px;top:174.54px"><b>商城</b><i>· B2C ·</i></div>
<div class="a" style="left:492px;width:200px;text-align:center;top:213.04px;line-height:18px;font-size:12px;color:#7b66f5">用户1</div>
<div class="a" style="left:650px;top:173.04px;line-height:18px;font-size:12.5px;color:#333">李白13434343344</div>
<div class="a" style="left:650px;top:192.04px;line-height:20px;font-size:14px;color:#333">北京市/市辖区/丰台区</div>
<div class="a" style="left:650px;top:214.54px;line-height:18px;font-size:13px;color:#999">111</div>
<div class="a" style="left:867px;top:192.04px;line-height:20px;font-size:14px;color:#333">快递物流</div>
<div class="a" style="left:961px;width:200px;text-align:center;top:192.04px;line-height:20px;font-size:14px;color:#333">¥7980.00</div>
<div class="a" style="left:1158px;top:192.04px;line-height:20px;font-size:14px;color:#7b66f5">详情</div>
<div class="a" style="left:1204px;top:192.04px;line-height:20px;font-size:14px;color:#7b66f5">日志</div>
<div class="a" style="left:0;top:242.88px;width:1377px;height:40.6px;background:#f7f7f9"></div>
<svg class="a" style="left:20px;top:259.88px" width="9" height="6" viewBox="0 0 9 6"><path d="M0.6 0.6 L4.5 4.8 L8.4 0.6" fill="none" stroke="#333" stroke-width="1.1"/></svg>
<div class="cb" style="left:60px;top:255.28px"></div>
<div class="a" style="left:108px;top:253.88px;line-height:18px;font-size:12px;color:#333">#7</div>
<div class="a" style="left:212px;top:253.88px;line-height:18px;font-size:12px;color:#333;letter-spacing:.3px">订单号:202411035115553166002000</div>
<svg class="a" style="left:425px;top:256.88px" width="11" height="11" viewBox="0 0 11 11"><rect x="3" y="1" width="7" height="7" rx="1" fill="none" stroke="#a99cf7" stroke-width="1.2"/><path d="M1 3 V9.5 a0.5 .5 0 0 0 .5 .5 H8" fill="none" stroke="#a99cf7" stroke-width="1.2"/></svg>
<div class="a" style="left:464px;top:253.88px;line-height:18px;font-size:12px;color:#333;letter-spacing:.3px">下单时间:2024-12-26 11:03:51</div>
<div class="a" style="left:657.5px;top:253.88px;line-height:18px;font-size:12px;color:#333">钱包支付</div>
<div class="a" style="left:961px;width:200px;text-align:center;top:252.88px;line-height:20px;font-size:14px;color:#7b66f5"><span style="border-bottom:1px dashed #7b66f5;padding-bottom:1px">¥299.00</span></div>
<div class="a" style="left:1155px;top:252.88px;line-height:20px;font-size:14px;color:#f5a623">待发货</div>
<div class="img" style="left:12px;top:294.98px;background:#ab9f8a"><span>示例图</span></div>
<div class="a" style="left:82px;top:289.98px;line-height:18px;font-size:12px;color:#333"><span class="pur">#17</span> 漫步者(EDIFIER) HECATE G2专业版 USB7.1声道 ...</div>
<div class="a" style="left:82px;top:306.48px;line-height:20px;font-size:14px;color:#333">白色</div>
<div class="a" style="left:82px;top:334.48px;line-height:20px;font-size:14.5px;color:#333">¥299.00&nbsp; x1</div>
<div class="tag" style="left:170.0px;top:335.48px">待发货</div>
<div class="a" style="left:451.5px;top:313.48px;line-height:20px;font-size:14px;color:#999">未申请</div>
<div class="av" style="left:574px;top:295.98px"><b>商城</b><i>· B2C ·</i></div>
<div class="a" style="left:492px;width:200px;text-align:center;top:334.48px;line-height:18px;font-size:12px;color:#7b66f5">用户1</div>
<div class="a" style="left:650px;top:294.48px;line-height:18px;font-size:12.5px;color:#333">李白13434343344</div>
<div class="a" style="left:650px;top:313.48px;line-height:20px;font-size:14px;color:#333">北京市/市辖区/丰台区</div>
<div class="a" style="left:650px;top:335.98px;line-height:18px;font-size:13px;color:#999">111</div>
<div class="a" style="left:867px;top:313.48px;line-height:20px;font-size:14px;color:#333">快递物流</div>
<div class="a" style="left:961px;width:200px;text-align:center;top:313.48px;line-height:20px;font-size:14px;color:#333">¥299.00</div>
<div class="btnp" style="left:1155px;top:310.98px;width:84px;background:#f1eefe;color:#7b66f5">立即发货 ›</div>
<div class="a" style="left:1252px;top:313.48px;line-height:20px;font-size:14px;color:#7b66f5">详情</div>
<div class="a" style="left:1299px;top:313.48px;line-height:20px;font-size:14px;color:#7b66f5">日志</div>
<div class="a" style="left:0;top:364.32px;width:1377px;height:40.6px;background:#f7f7f9"></div>
<svg class="a" style="left:20px;top:381.32px" width="9" height="6" viewBox="0 0 9 6"><path d="M0.6 0.6 L4.5 4.8 L8.4 0.6" fill="none" stroke="#333" stroke-width="1.1"/></svg>
<div class="cb" style="left:60px;top:376.72px"></div>
<div class="a" style="left:108px;top:375.32px;line-height:18px;font-size:12px;color:#333">#6</div>
<div class="a" style="left:212px;top:375.32px;line-height:18px;font-size:12px;color:#333;letter-spacing:.3px">订单号:202406280769098171002000</div>
<svg class="a" style="left:425px;top:378.32px" width="11" height="11" viewBox="0 0 11 11"><rect x="3" y="1" width="7" height="7" rx="1" fill="none" stroke="#a99cf7" stroke-width="1.2"/><path d="M1 3 V9.5 a0.5 .5 0 0 0 .5 .5 H8" fill="none" stroke="#a99cf7" stroke-width="1.2"/></svg>
<div class="a" style="left:464px;top:375.32px;line-height:18px;font-size:12px;color:#333;letter-spacing:.3px">下单时间:2024-11-02 18:28:07</div>
<div class="a" style="left:657.5px;top:375.32px;line-height:18px;font-size:12px;color:#333">钱包支付</div>
<div class="a" style="left:961px;width:200px;text-align:center;top:374.32px;line-height:20px;font-size:14px;color:#7b66f5"><span style="border-bottom:1px dashed #7b66f5;padding-bottom:1px">¥299.00</span></div>
<div class="a" style="left:1155px;top:374.32px;line-height:20px;font-size:14px;color:#f23c3c">申请退款中</div>
<div class="img" style="left:12px;top:416.42px;background:#ab9f8a"><span>示例图</span></div>
<div class="a" style="left:82px;top:411.42px;line-height:18px;font-size:12px;color:#333"><span class="pur">#17</span> 漫步者(EDIFIER) HECATE G2专业版 USB7.1声道 ...</div>
<div class="a" style="left:82px;top:427.92px;line-height:20px;font-size:14px;color:#333">白色</div>
<div class="a" style="left:82px;top:455.92px;line-height:20px;font-size:14.5px;color:#333">¥299.00&nbsp; x1</div>
<div class="tag" style="left:170.0px;top:456.92px">待发货</div>
<div class="a" style="left:451.5px;top:434.92px;line-height:20px;font-size:14px;color:#999">未申请</div>
<div class="av" style="left:574px;top:417.42px"><b>商城</b><i>· B2C ·</i></div>
<div class="a" style="left:492px;width:200px;text-align:center;top:455.92px;line-height:18px;font-size:12px;color:#7b66f5">用户1</div>
<div class="a" style="left:650px;top:415.92px;line-height:18px;font-size:12.5px;color:#333">李白13434343344</div>
<div class="a" style="left:650px;top:434.92px;line-height:20px;font-size:14px;color:#333">北京市/市辖区/丰台区</div>
<div class="a" style="left:650px;top:457.42px;line-height:18px;font-size:13px;color:#999">111</div>
<div class="a" style="left:867px;top:434.92px;line-height:20px;font-size:14px;color:#333">快递物流</div>
<div class="a" style="left:961px;width:200px;text-align:center;top:434.92px;line-height:20px;font-size:14px;color:#333">¥299.00</div>
<div class="btnp" style="left:1155px;top:432.42px;width:108px;background:#fdeeee;color:#f06060">用户申请退款 ›</div>
<div class="a" style="left:1278px;top:434.92px;line-height:20px;font-size:14px;color:#7b66f5">详情</div>
<div class="a" style="left:1325.4px;top:434.92px;line-height:20px;font-size:14px;color:#7b66f5">日志</div>
<div class="a" style="left:0;top:485.76px;width:1377px;height:40.6px;background:#f7f7f9"></div>
<svg class="a" style="left:20px;top:502.76px" width="9" height="6" viewBox="0 0 9 6"><path d="M0.6 0.6 L4.5 4.8 L8.4 0.6" fill="none" stroke="#333" stroke-width="1.1"/></svg>
<div class="cb" style="left:60px;top:498.16px"></div>
<div class="a" style="left:108px;top:496.76px;line-height:18px;font-size:12px;color:#333">#5</div>
<div class="a" style="left:212px;top:496.76px;line-height:18px;font-size:12px;color:#333;letter-spacing:.3px">订单号:202404170931133141006000</div>
<svg class="a" style="left:425px;top:499.76px" width="11" height="11" viewBox="0 0 11 11"><rect x="3" y="1" width="7" height="7" rx="1" fill="none" stroke="#a99cf7" stroke-width="1.2"/><path d="M1 3 V9.5 a0.5 .5 0 0 0 .5 .5 H8" fill="none" stroke="#a99cf7" stroke-width="1.2"/></svg>
<div class="a" style="left:464px;top:496.76px;line-height:18px;font-size:12px;color:#333;letter-spacing:.3px">下单时间:2024-10-18 16:17:09</div>
<div class="a" style="left:961px;width:200px;text-align:center;top:495.76px;line-height:20px;font-size:14px;color:#7b66f5"><span style="border-bottom:1px dashed #7b66f5;padding-bottom:1px">¥15.00</span><span style="font-size:13px"> 改价</span></div>
<div class="a" style="left:1155px;top:495.76px;line-height:20px;font-size:14px;color:#999">待付款</div>
<div class="img" style="left:12px;top:537.86px;background:#95a3c0"><span>示例图</span></div>
<div class="a" style="left:82px;top:532.86px;line-height:18px;font-size:12px;color:#333"><span class="pur">#31</span> 洁丽雅（Grace）3条抗菌新疆棉毛巾 纯棉柔软家...</div>
<div class="a" style="left:82px;top:577.36px;line-height:20px;font-size:14.5px;color:#333">¥15.00&nbsp; x1</div>
<div class="tag" style="left:161.9px;top:578.36px">待发货</div>
<div class="a" style="left:451.5px;top:556.36px;line-height:20px;font-size:14px;color:#999">未申请</div>
<div class="av" style="left:574px;top:538.86px"><b>商城</b><i>· B2C ·</i></div>
<div class="a" style="left:492px;width:200px;text-align:center;top:577.36px;line-height:18px;font-size:12px;color:#cdc4fb">用户dQE2...</div>
<div class="a" style="left:650px;top:537.36px;line-height:18px;font-size:12.5px;color:#333">崔13073313011</div>
<div class="a" style="left:650px;top:556.36px;line-height:20px;font-size:14px;color:#333">江苏省/苏州市/虎丘区</div>
<div class="a" style="left:650px;top:578.86px;line-height:18px;font-size:13px;color:#999">金桐湾</div>
<div class="a" style="left:867px;top:556.36px;line-height:20px;font-size:14px;color:#333">快递物流</div>
<div class="a" style="left:961px;width:200px;text-align:center;top:556.36px;line-height:20px;font-size:14px;color:#333">¥15.00</div>
<div class="a" style="left:1158px;top:556.36px;line-height:20px;font-size:14px;color:#7b66f5">详情</div>
<div class="a" style="left:1204px;top:556.36px;line-height:20px;font-size:14px;color:#7b66f5">日志</div>
<div class="a" style="left:0;top:607.20px;width:1377px;height:40.6px;background:#f7f7f9"></div>
<svg class="a" style="left:20px;top:624.20px" width="9" height="6" viewBox="0 0 9 6"><path d="M0.6 0.6 L4.5 4.8 L8.4 0.6" fill="none" stroke="#333" stroke-width="1.1"/></svg>
<div class="cb" style="left:60px;top:619.60px"></div>
<div class="a" style="left:108px;top:618.20px;line-height:18px;font-size:12px;color:#333">#4</div>
<div class="a" style="left:212px;top:618.20px;line-height:18px;font-size:12px;color:#333;letter-spacing:.3px">订单号:202403191151142410002000</div>
<svg class="a" style="left:425px;top:621.20px" width="11" height="11" viewBox="0 0 11 11"><rect x="3" y="1" width="7" height="7" rx="1" fill="none" stroke="#a99cf7" stroke-width="1.2"/><path d="M1 3 V9.5 a0.5 .5 0 0 0 .5 .5 H8" fill="none" stroke="#a99cf7" stroke-width="1.2"/></svg>
<div class="a" style="left:464px;top:618.20px;line-height:18px;font-size:12px;color:#333;letter-spacing:.3px">下单时间:2024-09-30 13:15:44</div>
<div class="a" style="left:657.5px;top:618.20px;line-height:18px;font-size:12px;color:#333">钱包支付</div>
<div class="a" style="left:961px;width:200px;text-align:center;top:617.20px;line-height:20px;font-size:14px;color:#7b66f5"><span style="border-bottom:1px dashed #7b66f5;padding-bottom:1px">¥7980.00</span></div>
<div class="a" style="left:1155px;top:617.20px;line-height:20px;font-size:14px;color:#f5a623">待发货</div>
<div class="img" style="left:12px;top:659.30px;background:#dacaaa"><span>示例图</span></div>
<div class="a" style="left:82px;top:654.30px;line-height:18px;font-size:12px;color:#333"><span class="pur">#19</span> Apple iPhone 13 Pro Max (A2644) 256GB 苍岭...</div>
<div class="a" style="left:82px;top:698.80px;line-height:20px;font-size:14.5px;color:#333">¥7980.00&nbsp; x1</div>
<div class="tag" style="left:178.1px;top:699.80px">待发货</div>
<div class="a" style="left:451.5px;top:677.80px;line-height:20px;font-size:14px;color:#999">未申请</div>
<div class="av" style="left:574px;top:660.30px"><b>商城</b><i>· B2C ·</i></div>
<div class="a" style="left:492px;width:200px;text-align:center;top:698.80px;line-height:18px;font-size:12px;color:#7b66f5">用户1</div>
<div class="a" style="left:650px;top:658.80px;line-height:18px;font-size:12.5px;color:#333">李白13434343344</div>
<div class="a" style="left:650px;top:677.80px;line-height:20px;font-size:14px;color:#333">北京市/市辖区/丰台区</div>
<div class="a" style="left:650px;top:700.30px;line-height:18px;font-size:13px;color:#999">111</div>
<div class="a" style="left:867px;top:677.80px;line-height:20px;font-size:14px;color:#333">快递物流</div>
<div class="a" style="left:961px;width:200px;text-align:center;top:677.80px;line-height:20px;font-size:14px;color:#333">¥7980.00</div>
<div class="btnp" style="left:1155px;top:675.30px;width:84px;background:#f1eefe;color:#7b66f5">立即发货 ›</div>
<div class="a" style="left:1252px;top:677.80px;line-height:20px;font-size:14px;color:#7b66f5">详情</div>
<div class="a" style="left:1299px;top:677.80px;line-height:20px;font-size:14px;color:#7b66f5">日志</div>
<div class="a" style="left:0;top:728.64px;width:1377px;height:40.6px;background:#f7f7f9"></div>
<svg class="a" style="left:20px;top:745.64px" width="9" height="6" viewBox="0 0 9 6"><path d="M0.6 0.6 L4.5 4.8 L8.4 0.6" fill="none" stroke="#333" stroke-width="1.1"/></svg>
<div class="cb" style="left:60px;top:741.04px"></div>
<div class="a" style="left:108px;top:739.64px;line-height:18px;font-size:12px;color:#333">#3</div>
<div class="a" style="left:212px;top:739.64px;line-height:18px;font-size:12px;color:#333;letter-spacing:.3px">订单号:202409314083326227002000</div>
<svg class="a" style="left:425px;top:742.64px" width="11" height="11" viewBox="0 0 11 11"><rect x="3" y="1" width="7" height="7" rx="1" fill="none" stroke="#a99cf7" stroke-width="1.2"/><path d="M1 3 V9.5 a0.5 .5 0 0 0 .5 .5 H8" fill="none" stroke="#a99cf7" stroke-width="1.2"/></svg>
<div class="a" style="left:464px;top:739.64px;line-height:18px;font-size:12px;color:#333;letter-spacing:.3px">下单时间:2024-08-19 09:31:40</div>
<div class="a" style="left:961px;width:200px;text-align:center;top:738.64px;line-height:20px;font-size:14px;color:#7b66f5"><span style="border-bottom:1px dashed #7b66f5;padding-bottom:1px">¥2199.00</span><span style="font-size:13px"> 改价</span></div>
<div class="a" style="left:1155px;top:738.64px;line-height:20px;font-size:14px;color:#999">待付款</div>
<div class="img" style="left:12px;top:780.74px;background:#dccbc6"><span>示例图</span></div>
<div class="a" style="left:82px;top:775.74px;line-height:18px;font-size:12px;color:#333"><span class="pur">#12</span> COACH蔻驰女包奢侈品官网奥莱山茶花Parker女士...</div>
<div class="a" style="left:82px;top:792.24px;line-height:20px;font-size:14px;color:#333">红色</div>
<div class="a" style="left:82px;top:820.24px;line-height:20px;font-size:14.5px;color:#333">¥2199.00&nbsp; x1</div>
<div class="tag" style="left:178.1px;top:821.24px">待发货</div>
<div class="a" style="left:451.5px;top:799.24px;line-height:20px;font-size:14px;color:#999">未申请</div>
<div class="av" style="left:574px;top:781.74px"><b>商城</b><i>· B2C ·</i></div>
<div class="a" style="left:492px;width:200px;text-align:center;top:820.24px;line-height:18px;font-size:12px;color:#7b66f5">用户1</div>
<div class="a" style="left:650px;top:780.24px;line-height:18px;font-size:12.5px;color:#333">李白13434343344</div>
<div class="a" style="left:650px;top:799.24px;line-height:20px;font-size:14px;color:#333">北京市/市辖区/丰台区</div>
<div class="a" style="left:650px;top:821.74px;line-height:18px;font-size:13px;color:#999">111</div>
<div class="a" style="left:867px;top:799.24px;line-height:20px;font-size:14px;color:#333">快递物流</div>
<div class="a" style="left:961px;width:200px;text-align:center;top:799.24px;line-height:20px;font-size:14px;color:#333">¥2199.00</div>
<div class="a" style="left:1158px;top:799.24px;line-height:20px;font-size:14px;color:#7b66f5">详情</div>
<div class="a" style="left:1204px;top:799.24px;line-height:20px;font-size:14px;color:#7b66f5">日志</div>
<div class="a" style="left:0;top:850.08px;width:1377px;height:40.6px;background:#f7f7f9"></div>
<svg class="a" style="left:20px;top:867.08px" width="9" height="6" viewBox="0 0 9 6"><path d="M0.6 0.6 L4.5 4.8 L8.4 0.6" fill="none" stroke="#333" stroke-width="1.1"/></svg>
<div class="cb" style="left:60px;top:862.48px"></div>
<div class="a" style="left:108px;top:861.08px;line-height:18px;font-size:12px;color:#333">#2</div>
<div class="a" style="left:212px;top:861.08px;line-height:18px;font-size:12px;color:#333;letter-spacing:.3px">订单号:202411122018138070002000</div>
<svg class="a" style="left:425px;top:864.08px" width="11" height="11" viewBox="0 0 11 11"><rect x="3" y="1" width="7" height="7" rx="1" fill="none" stroke="#a99cf7" stroke-width="1.2"/><path d="M1 3 V9.5 a0.5 .5 0 0 0 .5 .5 H8" fill="none" stroke="#a99cf7" stroke-width="1.2"/></svg>
<div class="a" style="left:464px;top:861.08px;line-height:18px;font-size:12px;color:#333;letter-spacing:.3px">下单时间:2024-08-06 23:12:20</div>
<div class="a" style="left:961px;width:200px;text-align:center;top:860.08px;line-height:20px;font-size:14px;color:#7b66f5"><span style="border-bottom:1px dashed #7b66f5;padding-bottom:1px">¥89.00</span><span style="font-size:13px"> 改价</span></div>
<div class="a" style="left:1155px;top:860.08px;line-height:20px;font-size:14px;color:#999">待付款</div>
<div class="img" style="left:12px;top:902.18px;background:#cdc6a8"><span>示例图</span></div>
<div class="a" style="left:82px;top:897.18px;line-height:18px;font-size:12px;color:#333"><span class="pur">#16</span> 迪士尼儿童水杯带吸管 tritan夏季可爱双饮塑料壶...</div>
<div class="a" style="left:82px;top:913.68px;line-height:20px;font-size:14px;color:#333">米妮粉</div>
<div class="a" style="left:82px;top:941.68px;line-height:20px;font-size:14.5px;color:#333">¥89.00&nbsp; x1</div>
<div class="tag" style="left:161.9px;top:942.68px">待发货</div>
<div class="a" style="left:451.5px;top:920.68px;line-height:20px;font-size:14px;color:#999">未申请</div>
<div class="av" style="left:574px;top:903.18px"><b>商城</b><i>· B2C ·</i></div>
<div class="a" style="left:492px;width:200px;text-align:center;top:941.68px;line-height:18px;font-size:12px;color:#7b66f5">用户1</div>
<div class="a" style="left:650px;top:901.68px;line-height:18px;font-size:12.5px;color:#333">李白13434343344</div>
<div class="a" style="left:650px;top:920.68px;line-height:20px;font-size:14px;color:#333">北京市/市辖区/丰台区</div>
<div class="a" style="left:650px;top:943.18px;line-height:18px;font-size:13px;color:#999">111</div>
<div class="a" style="left:867px;top:920.68px;line-height:20px;font-size:14px;color:#333">快递物流</div>
<div class="a" style="left:961px;width:200px;text-align:center;top:920.68px;line-height:20px;font-size:14px;color:#333">¥89.00</div>
<div class="a" style="left:1158px;top:920.68px;line-height:20px;font-size:14px;color:#7b66f5">详情</div>
<div class="a" style="left:1204px;top:920.68px;line-height:20px;font-size:14px;color:#7b66f5">日志</div>
<div class="a" style="left:0;top:971.52px;width:1377px;height:40.6px;background:#f7f7f9"></div>
<svg class="a" style="left:20px;top:988.52px" width="9" height="6" viewBox="0 0 9 6"><path d="M0.6 0.6 L4.5 4.8 L8.4 0.6" fill="none" stroke="#333" stroke-width="1.1"/></svg>
<div class="cb" style="left:60px;top:983.92px"></div>
<div class="a" style="left:108px;top:982.52px;line-height:18px;font-size:12px;color:#333">#1</div>
<div class="a" style="left:212px;top:982.52px;line-height:18px;font-size:12px;color:#333;letter-spacing:.3px">订单号:202411185073949666002000</div>
<svg class="a" style="left:425px;top:985.52px" width="11" height="11" viewBox="0 0 11 11"><rect x="3" y="1" width="7" height="7" rx="1" fill="none" stroke="#a99cf7" stroke-width="1.2"/><path d="M1 3 V9.5 a0.5 .5 0 0 0 .5 .5 H8" fill="none" stroke="#a99cf7" stroke-width="1.2"/></svg>
<div class="a" style="left:464px;top:982.52px;line-height:18px;font-size:12px;color:#333;letter-spacing:.3px">下单时间:2024-04-17 11:18:50</div>
<div class="a" style="left:961px;width:200px;text-align:center;top:981.52px;line-height:20px;font-size:14px;color:#7b66f5"><span style="border-bottom:1px dashed #7b66f5;padding-bottom:1px">¥7980.00</span></div>
<div class="a" style="left:1155px;top:981.52px;line-height:20px;font-size:14px;color:#f23c3c">已取消</div>
<div class="img" style="left:12px;top:1023.62px;background:#dacaaa"><span>示例图</span></div>
<div class="a" style="left:82px;top:1018.62px;line-height:18px;font-size:12px;color:#333"><span class="pur">#19</span> Apple iPhone 13 Pro Max (A2644) 256GB 苍岭...</div>
<div class="a" style="left:82px;top:1063.12px;line-height:20px;font-size:14.5px;color:#333">¥7980.00&nbsp; x1</div>
<div class="tag" style="left:178.1px;top:1064.12px">待发货</div>
<div class="a" style="left:451.5px;top:1042.12px;line-height:20px;font-size:14px;color:#999">未申请</div>
<div class="av" style="left:574px;top:1024.62px"><b>商城</b><i>· B2C ·</i></div>
<div class="a" style="left:492px;width:200px;text-align:center;top:1063.12px;line-height:18px;font-size:12px;color:#7b66f5">用户1</div>
<div class="a" style="left:650px;top:1023.12px;line-height:18px;font-size:12.5px;color:#333">李白13434343344</div>
<div class="a" style="left:650px;top:1042.12px;line-height:20px;font-size:14px;color:#333">北京市/市辖区/丰台区</div>
<div class="a" style="left:650px;top:1064.62px;line-height:18px;font-size:13px;color:#999">111</div>
<div class="a" style="left:867px;top:1042.12px;line-height:20px;font-size:14px;color:#333">快递物流</div>
<div class="a" style="left:961px;width:200px;text-align:center;top:1042.12px;line-height:20px;font-size:14px;color:#333">¥7980.00</div>
<div class="a" style="left:1158px;top:1042.12px;line-height:20px;font-size:14px;color:#7b66f5">详情</div>
<div class="a" style="left:1204px;top:1042.12px;line-height:20px;font-size:14px;color:#7b66f5">日志</div>
<div class="a" style="left:1369px;top:2px;width:6px;height:896px;border-radius:3px;background:#c8c8c8"></div>
</div>
<div class="a" style="left:243px;top:1216px;width:1417px;height:56px;background:#fff;border-radius:6px 6px 4px 4px;box-shadow:0 -4px 10px rgba(0,0,0,.06)"></div>
<div class="a" style="left:263px;top:1234px;line-height:20px;font-size:14px;color:#333">已选择 0 项</div>
<div class="a" style="left:348px;top:1228px;width:87px;height:32px;border:1px solid #dcdfe6;border-radius:4px;line-height:30px;text-align:center;font-size:14px;color:#bbb">批量发货</div>
<div class="a" style="left:1225px;top:1234px;line-height:20px;font-size:14px;color:#333">共 9 条</div>
<div class="a" style="left:1286px;top:1228px;width:128px;height:32px;border:1px solid #dcdfe6;border-radius:4px"></div>
<div class="a" style="left:1314px;top:1234px;line-height:20px;font-size:14px;color:#333">10条/页</div>
<svg class="a" style="left:1388px;top:1240px" width="11" height="7" viewBox="0 0 11 7"><path d="M1 1 L5.5 5.5 L10 1" fill="none" stroke="#bbb" stroke-width="1.1"/></svg>
<svg class="a" style="left:1441px;top:1238px" width="7" height="11" viewBox="0 0 7 11"><path d="M6 1 L1.5 5.5 L6 10" fill="none" stroke="#bbb" stroke-width="1.1"/></svg>
<div class="a" style="left:1473px;top:1234px;line-height:20px;font-size:14px;font-weight:bold;color:#7b66f5">1</div>
<svg class="a" style="left:1507px;top:1238px" width="7" height="11" viewBox="0 0 7 11"><path d="M1 1 L5.5 5.5 L1 10" fill="none" stroke="#bbb" stroke-width="1.1"/></svg>
<div class="a" style="left:1542px;top:1234px;line-height:20px;font-size:14px;color:#333">前往</div>
<div class="a" style="left:1570px;top:1232px;width:56px;height:24px;border:1px solid #dcdfe6;border-radius:4px;border-right:none"></div>
<div class="a" style="left:1594px;top:1234px;line-height:20px;font-size:14px;color:#333">1</div>
<svg class="a" style="left:1472px;top:141px" width="16" height="16" viewBox="0 0 16 16"><path d="M12.6 8.6 A4.7 4.7 0 1 1 11.2 4.6" fill="none" stroke="#333" stroke-width="1.2"/><path d="M9.6 5.4 L12.9 5.6 L12.8 2.3 Z" fill="#333"/></svg>
<svg class="a" style="left:1515px;top:140px" width="17" height="17" viewBox="0 0 17 17"><circle cx="8.5" cy="8.5" r="5.5" fill="none" stroke="#333" stroke-width="1.2"/><path d="M12.4 12.4 L15 15" stroke="#333" stroke-width="1.2"/></svg>
<div class="a" style="left:263px;top:1190px;width:1377px;height:26px;background:linear-gradient(180deg,rgba(0,0,0,0),rgba(0,0,0,.05))"></div>
<div class="a" style="left:746px;top:624px;line-height:40px;font-size:32px;font-weight:bold;color:#b4b4b4;-webkit-text-stroke:2.2px #b4b4b4;opacity:.4;transform:scaleX(1.17) skewX(-11deg);transform-origin:left bottom;letter-spacing:1px">刀客源码网</div>
<div class="a" style="left:783px;top:808.6px;width:143px;height:60px;background:rgba(255,255,255,.9);border-radius:4px;box-shadow:0 2px 10px rgba(0,0,0,.08)"></div>
<div class="a" style="left:849px;top:863px;width:12px;height:12px;transform:rotate(45deg);background:rgba(255,255,255,.9);box-shadow:2px 2px 4px rgba(0,0,0,.04)"></div>
<div style="opacity:.85">
<div class="av" style="left:795px;top:820.8px"><b>商城</b><i>· B2C ·</i></div>
<div class="a" style="left:819px;top:845px;width:12px;height:12px;border-radius:3px;background:#f59a9a"></div>
<svg class="a" style="left:821px;top:847px" width="8" height="8" viewBox="0 0 8 8"><path d="M4 1 A3 3 0 1 1 1.2 5" fill="none" stroke="#fff" stroke-width="1"/><path d="M3 3 L5.5 4 L3 5.5 Z" fill="#fff"/></svg>
<div class="a" style="left:839px;top:820px;line-height:20px;font-size:14px;color:#666">用户1</div>
<div class="a" style="left:839px;top:840px;line-height:18px;font-size:12.5px;color:#999"><span style="color:#7b66f5">#2</span> FwSzHZLt</div>
</div>
<div class="a" style="left:1615px;top:1177px;width:40px;height:40px;border-radius:50%;background:#fff;box-shadow:0 2px 12px rgba(0,0,0,.08)"></div>
<svg class="a" style="left:1628.5px;top:1188px" width="14" height="17" viewBox="0 0 14 17"><path d="M7 0.5 C10.2 0.5 11.6 2.8 11.6 5.6 V8.6 C11.6 10 12.6 10.8 13.4 11.4 C14 11.9 13.7 12.8 12.9 12.8 H1.1 C0.3 12.8 0 11.9 0.6 11.4 C1.4 10.8 2.4 10 2.4 8.6 V5.6 C2.4 2.8 3.8 0.5 7 0.5 Z" fill="#7b66f5"/><path d="M5 14 H9 C9 15.6 8 16.4 7 16.4 C6 16.4 5 15.6 5 14 Z" fill="#7b66f5"/></svg>
<div class="a" style="left:1615px;top:1226px;width:40px;height:40px;border-radius:50%;background:#fff;box-shadow:0 2px 12px rgba(0,0,0,.08)"></div>
<svg class="a" style="left:1627px;top:1238px" width="17" height="17" viewBox="0 0 17 17"><path d="M8.5 0.3 A8 7.7 0 1 1 4.6 15 L1.2 16.6 L2 13 A8 7.7 0 0 1 8.5 0.3 Z" fill="#7b66f5"/><circle cx="5" cy="8" r="1" fill="#fff"/><circle cx="8.5" cy="8" r="1" fill="#fff"/><circle cx="12" cy="8" r="1" fill="#fff"/></svg>
<div class="a" style="left:1472px;top:1244px;line-height:30px;font-size:24px;font-weight:bold;color:rgba(240,120,130,.4);-webkit-text-stroke:.7px rgba(240,120,130,.4);letter-spacing:2.5px">www.52xb.cn</div>
<div class="a" style="left:1664px;top:-4px;width:14px;height:7px;border-radius:50%;background:#555;filter:blur(1px);transform:rotate(30deg)"></div>
</body></html>
